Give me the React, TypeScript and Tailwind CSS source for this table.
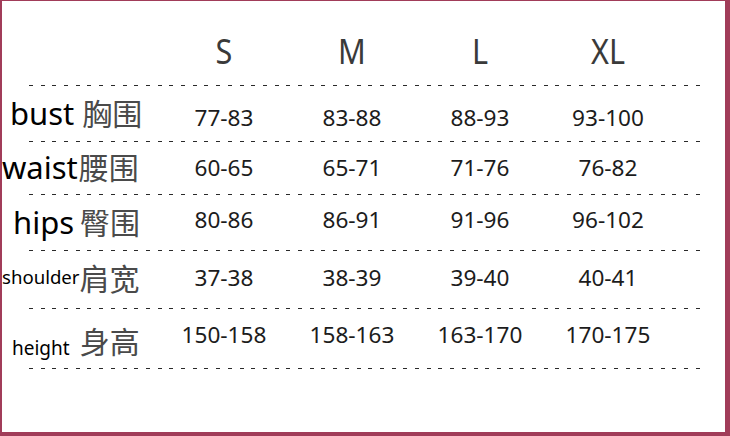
import React from "react";

const dash =
  "h-px ml-[27px] w-[674px] bg-[repeating-linear-gradient(to_right,#2a2a2a_0px,#2a2a2a_4px,transparent_4px,transparent_11.7px)]";

type Row = {
  en: string;
  enCls: string;
  cn: string;
  cnCls: string;
  labelCls: string;
  h: string;
  dataCls: string;
  vals: string[];
};

const rows: Row[] = [
  {
    en: "bust",
    enCls: "text-[31px]",
    cn: "胸围",
    cnCls: "ml-[8px] text-[30px]",
    labelCls: "pl-[8px] -mt-[2px]",
    h: "h-[55px]",
    dataCls: "mt-[9px]",
    vals: ["77-83", "83-88", "88-93", "93-100"],
  },
  {
    en: "waist",
    enCls: "text-[31px]",
    cn: "腰围",
    cnCls: "ml-[1px] text-[30px]",
    labelCls: "pl-0 -mt-[2px]",
    h: "h-[52px]",
    dataCls: "mt-0",
    vals: ["60-65", "65-71", "71-76", "76-82"],
  },
  {
    en: "hips",
    enCls: "text-[31px]",
    cn: "臀围",
    cnCls: "ml-[6px] text-[30px]",
    labelCls: "pl-[11px] -mt-[2px]",
    h: "h-[55px]",
    dataCls: "-mt-[5px]",
    vals: ["80-86", "86-91", "91-96", "96-102"],
  },
  {
    en: "shoulder",
    enCls: "text-[18.6px] relative -top-[6px]",
    cn: "肩宽",
    cnCls: "ml-0 text-[30px]",
    labelCls: "pl-0 -mt-[4px]",
    h: "h-[57px]",
    dataCls: "-mt-[2px]",
    vals: ["37-38", "38-39", "39-40", "40-41"],
  },
  {
    en: "height",
    enCls: "text-[19px] relative top-[2px]",
    cn: "身高",
    cnCls: "ml-[10px] text-[30px]",
    labelCls: "pl-[10px] mt-[4px]",
    h: "h-[59px]",
    dataCls: "-mt-[6px]",
    vals: ["150-158", "158-163", "163-170", "170-175"],
  },
];

export default function App() {
  return (
    <div className="w-[730px] h-[436px] bg-white border-[#a13c59] border-t-[1px] border-l-[2px] border-r-[5px] border-b-[4px] overflow-hidden font-['Noto_Sans','Noto_Sans_CJK_SC',sans-serif]">
      <div className="flex flex-col">
        <div className="h-[84px] grid grid-cols-[158px_128px_128px_128px_128px] items-center">
          <div />
          {["S", "M", "L", "XL"].map((s) => (
            <div
              key={s}
              className="text-center text-[34px] text-[#3a3a3a] mt-[16px] leading-none scale-x-[0.9]"
            >
              {s}
            </div>
          ))}
        </div>
        <div className={dash} />
        {rows.map((r) => (
          <React.Fragment key={r.en}>
            <div
              className={`${r.h} grid grid-cols-[158px_128px_128px_128px_128px] items-center`}
            >
              <div className={`flex items-baseline whitespace-nowrap ${r.labelCls}`}>
                <span className={`${r.enCls} text-black leading-none`}>{r.en}</span>
                <span
                  className={`${r.cnCls} text-[#4a4a4a] leading-none font-['Noto_Sans_CJK_SC',sans-serif]`}
                >
                  {r.cn}
                </span>
              </div>
              {r.vals.map((v, i) => (
                <div
                  key={i}
                  className={`text-center text-[22.6px] text-[#1c1c1c] leading-none ${r.dataCls}`}
                >
                  {v}
                </div>
              ))}
            </div>
            <div className={dash} />
          </React.Fragment>
        ))}
      </div>
    </div>
  );
}
